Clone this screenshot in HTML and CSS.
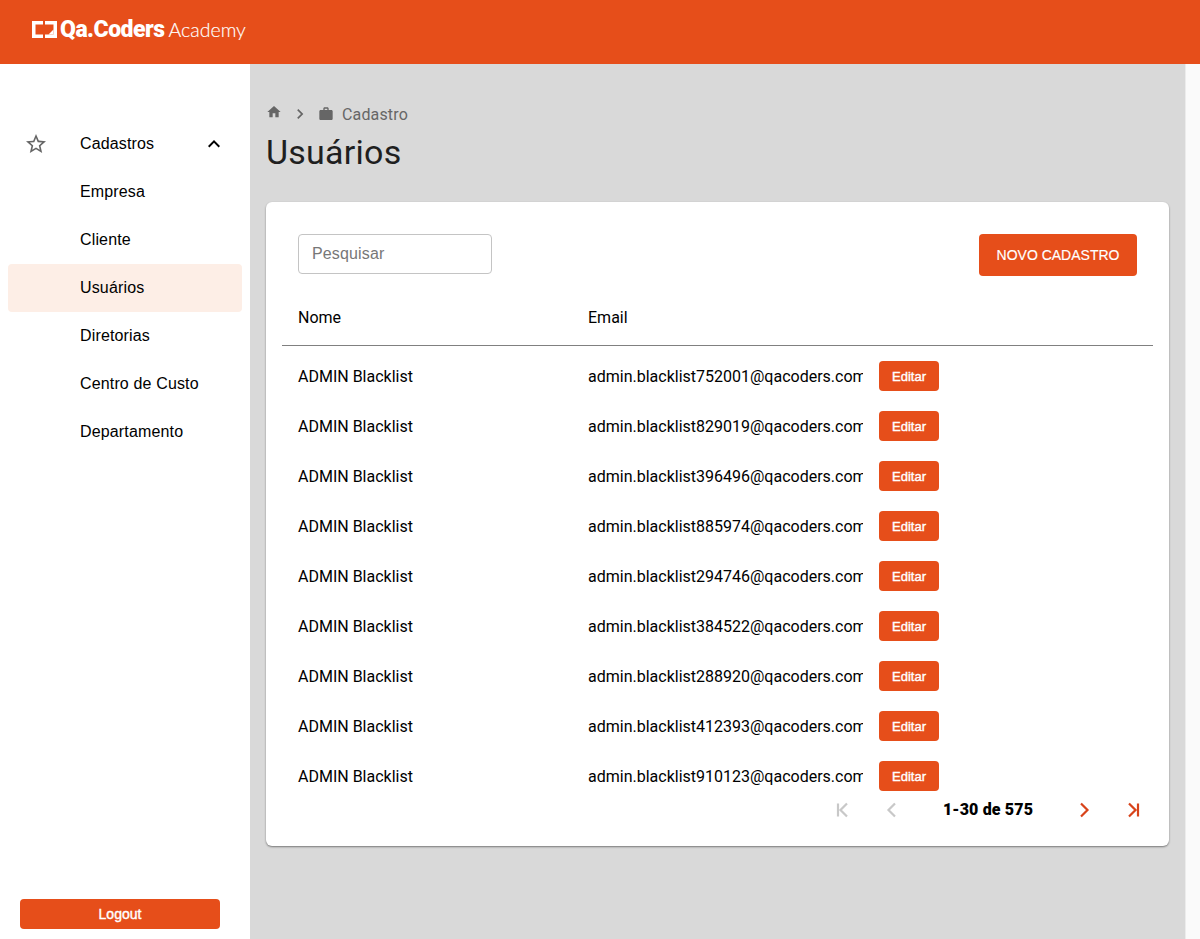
FILE: index.html
```html
<!DOCTYPE html>
<html lang="pt-BR">
<head>
<meta charset="utf-8">
<title>Usuários</title>
<link rel="stylesheet" href="styles.css">
</head>
<body>
<header class="topbar">
  <div class="logo">
    <svg class="logo-mark" width="25" height="17" viewBox="0 0 25 17"><path fill="#fff" d="M0 0h11v3.500H3.500v10H11V17H0z"/><path fill="#fff" d="M13 0h12v17H13v-3.500h8.500v-10H13z"/><path fill="#fff" d="M21.500 8.500v5H16.500z"/></svg>
    <span class="logo-bold">Qa.Coders</span>
    <span class="logo-light">Academy</span>
  </div>
</header>
<div class="shell">
  <aside class="sidebar">
    <nav class="menu">
      <div class="menu-item menu-parent">
        <svg class="star" width="24" height="24" viewBox="0 0 24 24"><path fill="#666" d="m22 9.24-7.19-.62L12 2 9.19 8.63 2 9.24l5.46 4.73L5.820 21 12 17.270 18.180 21l-1.630-7.030L22 9.240zM12 15.400l-3.760 2.270 1-4.280-3.320-2.880 4.380-.380L12 6.100l1.710 4.040 4.380.380-3.320 2.880 1 4.280L12 15.400z"/></svg>
        <span class="menu-label">Cadastros</span>
        <svg class="chev" width="24" height="24" viewBox="0 0 24 24"><path fill="#000" d="M12 8l-6 6 1.410 1.410L12 10.830l4.590 4.580L18 14z"/></svg>
      </div>
      <a class="menu-item">Empresa</a>
      <a class="menu-item">Cliente</a>
      <a class="menu-item active">Usuários</a>
      <a class="menu-item">Diretorias</a>
      <a class="menu-item">Centro de Custo</a>
      <a class="menu-item">Departamento</a>
    </nav>
    <button class="logout">Logout</button>
  </aside>
  <main class="content">
    <div class="crumbs">
      <svg class="crumb-home" width="16" height="16" viewBox="0 0 24 24"><path fill="#666" d="M10 20v-6h4v6h5v-8h3L12 3 2 12h3v8z"/></svg>
      <svg class="crumb-sep" width="20" height="20" viewBox="0 0 24 24"><path fill="#666" d="M8.590 16.590 13.170 12 8.590 7.410 10 6l6 6-6 6z"/></svg>
      <svg class="crumb-case" width="16" height="16" viewBox="0 0 24 24"><path fill="#666" d="M20 6h-4V4c0-1.110-.89-2-2-2h-4c-1.110 0-2 .89-2 2v2H4c-1.110 0-1.990.89-1.990 2L2 19c0 1.110.89 2 2 2h16c1.110 0 2-.89 2-2V8c0-1.110-.89-2-2-2zm-6 0h-4V4h4v2z"/></svg>
      <span>Cadastro</span>
    </div>
    <h1 class="title">Usuários</h1>
    <section class="card">
      <div class="toolbar">
        <input class="search" type="text" placeholder="Pesquisar">
        <button class="primary">NOVO CADASTRO</button>
      </div>
      <div class="row head">
        <div class="c-name">Nome</div>
        <div class="c-email">Email</div>
      </div>
      <div class="rows">
        <div class="row"><div class="c-name">ADMIN Blacklist</div><div class="c-email">admin.blacklist752001@qacoders.com</div><button class="edit">Editar</button></div>
        <div class="row"><div class="c-name">ADMIN Blacklist</div><div class="c-email">admin.blacklist829019@qacoders.com</div><button class="edit">Editar</button></div>
        <div class="row"><div class="c-name">ADMIN Blacklist</div><div class="c-email">admin.blacklist396496@qacoders.com</div><button class="edit">Editar</button></div>
        <div class="row"><div class="c-name">ADMIN Blacklist</div><div class="c-email">admin.blacklist885974@qacoders.com</div><button class="edit">Editar</button></div>
        <div class="row"><div class="c-name">ADMIN Blacklist</div><div class="c-email">admin.blacklist294746@qacoders.com</div><button class="edit">Editar</button></div>
        <div class="row"><div class="c-name">ADMIN Blacklist</div><div class="c-email">admin.blacklist384522@qacoders.com</div><button class="edit">Editar</button></div>
        <div class="row"><div class="c-name">ADMIN Blacklist</div><div class="c-email">admin.blacklist288920@qacoders.com</div><button class="edit">Editar</button></div>
        <div class="row"><div class="c-name">ADMIN Blacklist</div><div class="c-email">admin.blacklist412393@qacoders.com</div><button class="edit">Editar</button></div>
        <div class="row"><div class="c-name">ADMIN Blacklist</div><div class="c-email">admin.blacklist910123@qacoders.com</div><button class="edit">Editar</button></div>
      </div>
      <div class="pager">
        <svg class="pg" width="24" height="24" viewBox="0 -1 24 24"><path fill="none" stroke="#c8c8c8" stroke-width="2.200" d="M17 5.500 10.500 12l6.500 6.500M8 5.500v13"/></svg>
        <svg class="pg" width="24" height="24" viewBox="0 -1 24 24"><path fill="none" stroke="#c8c8c8" stroke-width="2.200" d="M15 5.500 8.500 12l6.500 6.500"/></svg>
        <span class="pg-text">1-30 de 575</span>
        <svg class="pg" width="24" height="24" viewBox="0 -1 24 24"><path fill="none" stroke="#d8431a" stroke-width="2.200" d="M9 5.500 15.500 12 9 18.500"/></svg>
        <svg class="pg" width="24" height="24" viewBox="0 -1 24 24"><path fill="none" stroke="#d8431a" stroke-width="2.200" d="M7 5.500 13.500 12 7 18.500M16 5.500v13"/></svg>
      </div>
    </section>
  </main>
  <div class="scrollbar"></div>
</div>
</body>
</html>
```
FILE: styles.css
```css
* { box-sizing: border-box; }
html, body { margin: 0; height: 100%; overflow: hidden; }
body { display: flex; flex-direction: column; font-family: Roboto, "Liberation Sans", Arial, sans-serif; color: #000; background: #fff; }
.topbar { height: 64px; flex: none; background: #e64e1a; display: flex; align-items: center; padding-left: 32px; }
.logo { display: flex; align-items: center; color: #fff; height: 64px; }
.logo-mark { margin-top: -6px; }
.logo-bold { font-family: Roboto, sans-serif; font-weight: 900; font-size: 23px; letter-spacing: -0.5px; margin-left: 3px; margin-top: -6px; }
.logo-light { font-family: Lato, sans-serif; font-weight: 300; font-size: 19.5px; margin-left: 4px; margin-top: -6px; -webkit-text-stroke: 0.15px #fff; }
.shell { flex: 1; display: flex; min-height: 0; }
.sidebar { width: 250px; flex: none; background: #fff; display: flex; flex-direction: column; justify-content: space-between; padding: 56px 8px 10px; }
.menu { display: flex; flex-direction: column; }
.menu-item { height: 48px; display: flex; align-items: center; padding-left: 72px; font: 400 16px "Liberation Sans", Arial, sans-serif; letter-spacing: 0.15px; border-radius: 4px; color: #000; }
.menu-parent { position: relative; }
.star { position: absolute; left: 16px; top: 12px; }
.chev { position: absolute; left: 194px; top: 12px; }
.active { background: #fdeee6; }
.logout { width: 200px; height: 30px; align-self: flex-start; margin-left: 12px; background: #e64e1a; color: #fff; border: 0; border-radius: 4px; font: 400 14px "Liberation Sans", Arial, sans-serif; -webkit-text-stroke: 0.4px #fff; }
.content { flex: 1; min-width: 0; background: #d9d9d9; padding: 40px 16px 0; }
.crumbs { display: flex; align-items: center; height: 20px; color: #666; font: 400 16px Roboto, sans-serif; letter-spacing: 0.15px; }
.crumb-home { margin-top: -4px; }
.crumb-sep { margin-left: 8px; }
.crumb-case { margin-left: 8px; margin-right: 8px; }
.title { margin: 7px 0 0; height: 42px; font: 400 34px/42px Roboto, sans-serif; color: #1f1f1f; letter-spacing: 0.25px; }
.card { margin-top: 29px; height: 644px; background: #fff; border-radius: 6px; box-shadow: 0 1px 2px rgba(0,0,0,.45); padding: 32px 16px 0; }
.toolbar { display: flex; justify-content: space-between; align-items: flex-start; padding: 0 16px; height: 42px; }
.search { width: 194px; height: 40px; border: 1px solid #c4c4c4; border-radius: 4px; padding: 0 13px; font: 16px "Liberation Sans", Arial, sans-serif; letter-spacing: 0.15px; outline: 0; }
.search::placeholder { color: #777; opacity: 1; }
.primary { width: 158px; height: 42px; border: 0; border-radius: 4px; background: #e64e1a; color: #fff; font: 400 14px "Liberation Sans", Arial, sans-serif; -webkit-text-stroke: 0.15px #fff; }
.row { display: flex; align-items: center; padding-left: 16px; height: 50px; font-size: 16px; }
.head { height: 70px; padding-top: 13px; border-bottom: 1px solid #808080; }
.c-name { width: 290px; flex: none; }
.c-email { width: 275px; flex: none; overflow: hidden; white-space: nowrap; }
.rows { padding-top: 5px; }
.edit { width: 60px; height: 30px; margin-left: 16px; border: 0; border-radius: 4px; background: #e64e1a; color: #fff; font: 400 13px "Liberation Sans", Arial, sans-serif; -webkit-text-stroke: 0.4px #fff; }
.pager { display: flex; align-items: center; justify-content: flex-end; margin-right: -6px; height: 24px; margin-top: -4px; }
.pg { margin: 0 13px; display: block; }
.pg-text { font: 900 16px Roboto, sans-serif; letter-spacing: 0.15px; width: 142px; text-align: center; }
.scrollbar { width: 15px; flex: none; background: #fafafa; border-left: 1px solid #ececec; }
```
